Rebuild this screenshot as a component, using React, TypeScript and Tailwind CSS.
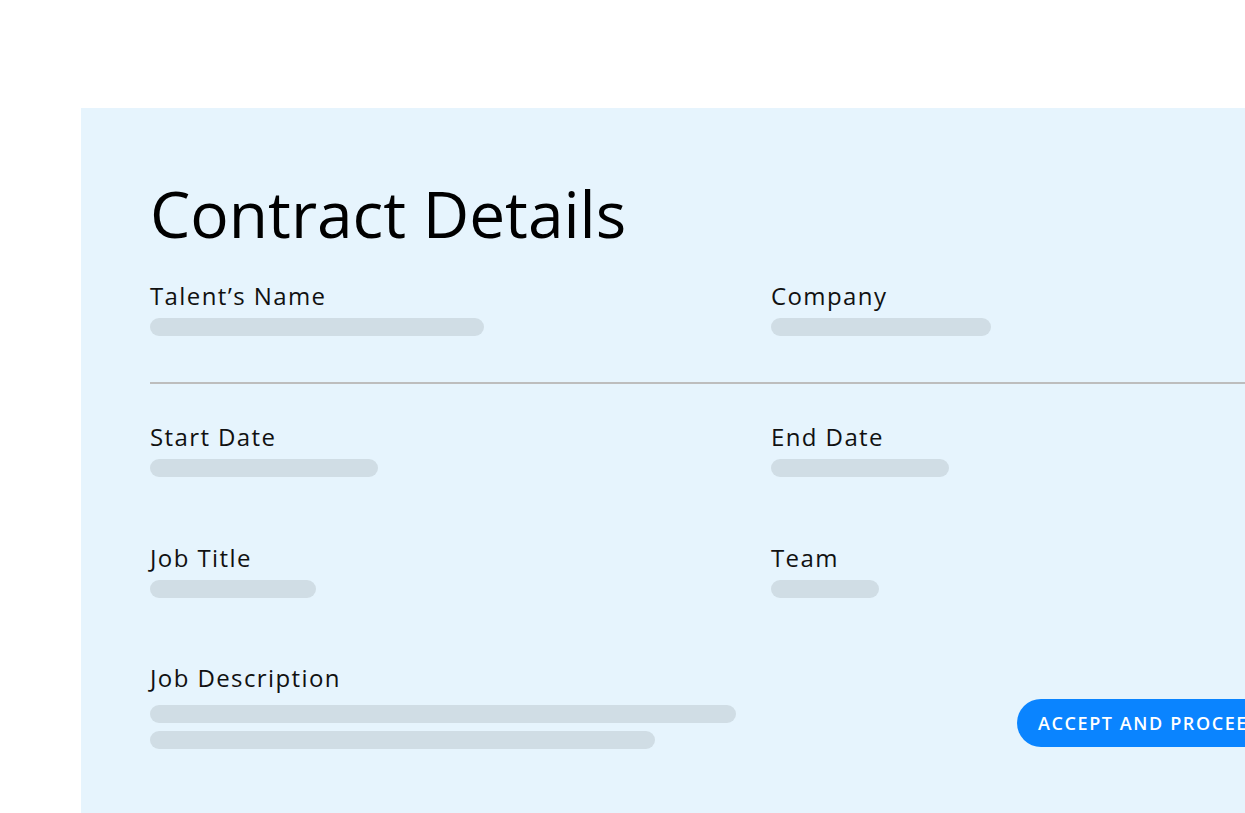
import React from 'react';

const font = { fontFamily: '"Open Sans", "Liberation Sans", sans-serif' };

interface FieldProps {
  label: string;
  bars: number[];
  barGap?: string;
}

// label with grey placeholder bars underneath
const Field: React.FC<FieldProps> = ({ label, bars, barGap = 'mt-2' }) => (
  <div className="flex flex-col">
    <div className="text-[24px] leading-[28px] tracking-[1.4px] text-[#111]">{label}</div>
    <div className={`${barGap} flex flex-col gap-2`}>
      {bars.map((w, i) => (
        <div key={i} className="h-[18px] rounded-full bg-[#d0dde5]" style={{ width: w }} />
      ))}
    </div>
  </div>
);

export default function App() {
  return (
    <div className="h-[813px] w-full overflow-hidden bg-white" style={font}>
      <div className="ml-[81px] mt-[108px] h-[705px] w-[1200px] bg-[#e6f4fd] pl-[69px] pt-[74px]">
        <h1 className="text-[64px] leading-none font-normal text-black">Contract Details</h1>

        <div className="mt-[36px] grid grid-cols-[621px_1fr]">
          <Field label="Talent’s Name" bars={[334]} />
          <Field label="Company" bars={[220]} />
        </div>

        <div className="mt-[46px] h-[2px] bg-[#bdbdbd]" />

        <div className="mt-[39px] grid grid-cols-[621px_1fr]">
          <Field label="Start Date" bars={[228]} />
          <Field label="End Date" bars={[178]} />
        </div>

        <div className="mt-[67px] grid grid-cols-[621px_1fr]">
          <Field label="Job Title" bars={[166]} />
          <Field label="Team" bars={[108]} />
        </div>

        <div className="mt-[66px] grid grid-cols-[621px_1fr]">
          <Field label="Job Description" bars={[586, 505]} barGap="mt-[13px]" />
          <div className="pl-[246px] pt-[35px]">
            <button className="h-[48px] whitespace-nowrap rounded-full bg-[#0a84ff] px-[21px] text-[18px] font-semibold tracking-[1.6px] text-white">
              ACCEPT AND PROCEED
            </button>
          </div>
        </div>
      </div>
    </div>
  );
}
